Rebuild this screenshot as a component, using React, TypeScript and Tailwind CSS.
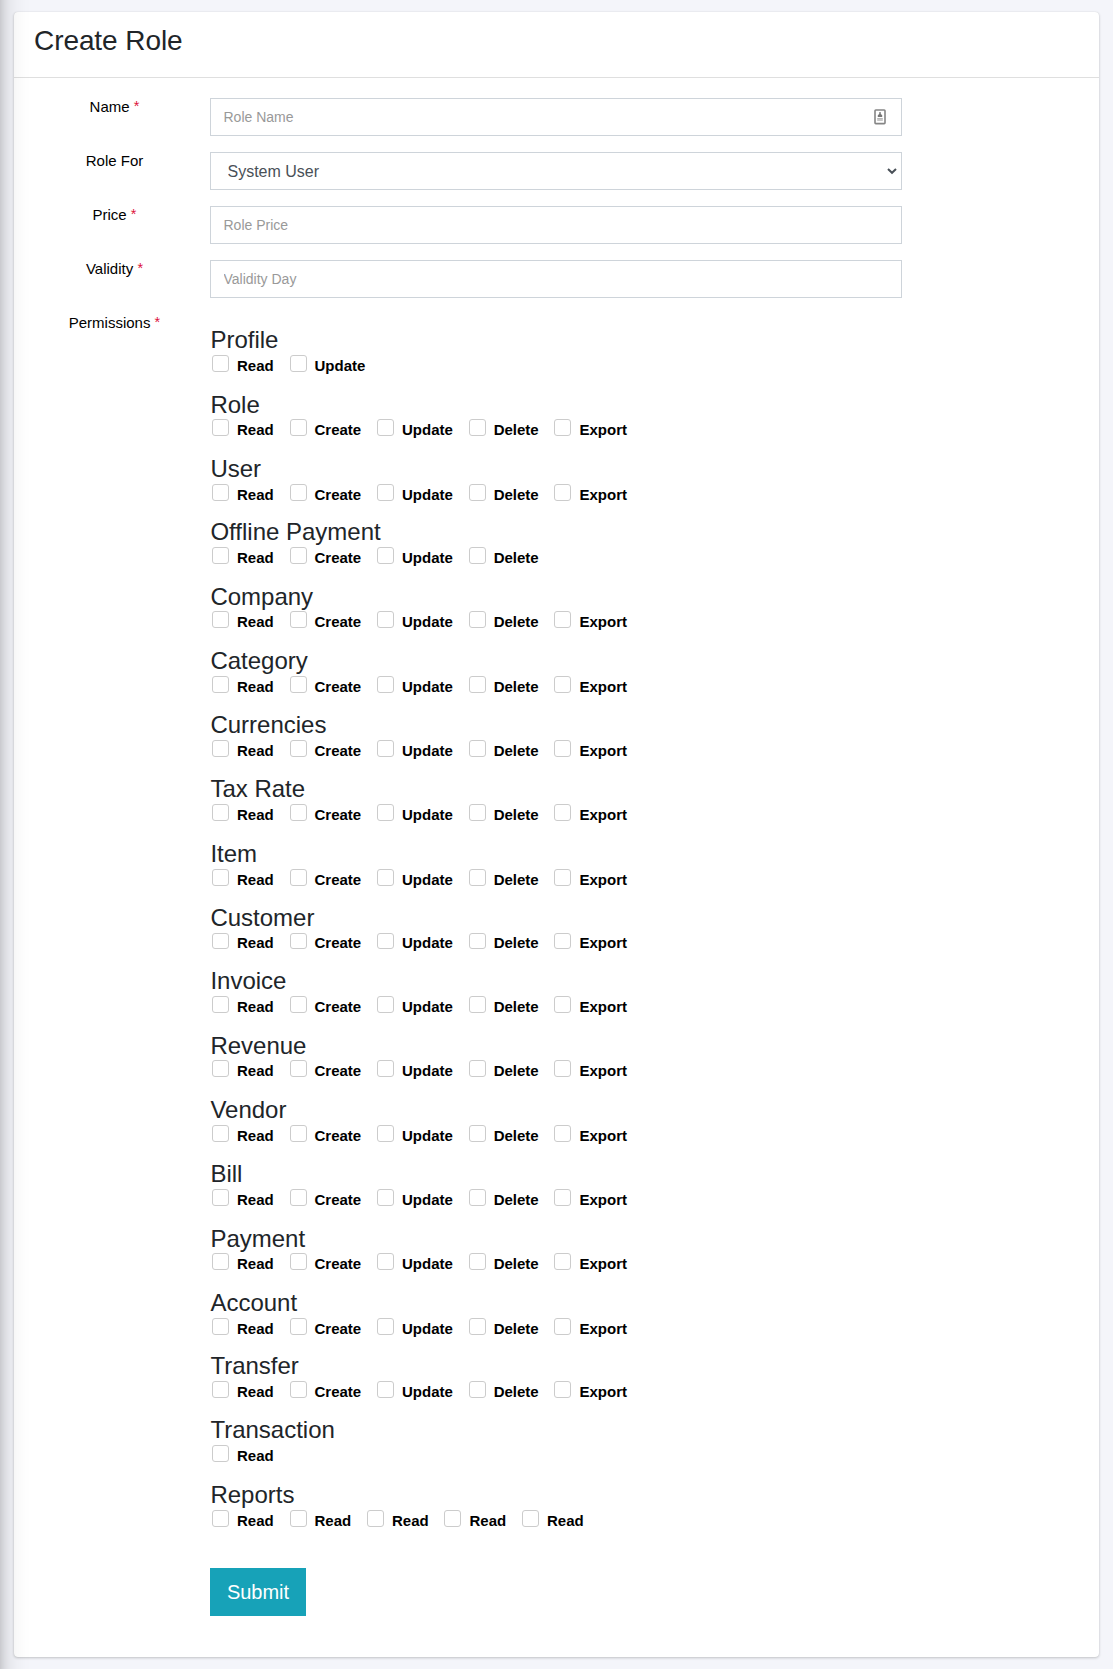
import React from "react";

type Section = { title: string; items: string[]; height: string; gap: string };

const ALL = ["Read", "Create", "Update", "Delete", "Export"];

const sections: Section[] = [
  { title: "Profile", items: ["Read", "Update"], height: "h-[65px]", gap: "mt-px" },
  { title: "Role", items: ALL, height: "h-16", gap: "mt-0" },
  { title: "User", items: ALL, height: "h-[63px]", gap: "mt-px" },
  { title: "Offline Payment", items: ALL.slice(0, 4), height: "h-[65px]", gap: "mt-px" },
  { title: "Company", items: ALL, height: "h-16", gap: "mt-0" },
  { title: "Category", items: ALL, height: "h-16", gap: "mt-px" },
  { title: "Currencies", items: ALL, height: "h-16", gap: "mt-px" },
  { title: "Tax Rate", items: ALL, height: "h-[65px]", gap: "mt-px" },
  { title: "Item", items: ALL, height: "h-16", gap: "mt-px" },
  { title: "Customer", items: ALL, height: "h-[63px]", gap: "mt-px [&_input]:h-4 [&_span]:pt-px" },
  { title: "Invoice", items: ALL, height: "h-[65px]", gap: "mt-px" },
  { title: "Revenue", items: ALL, height: "h-16", gap: "mt-0" },
  { title: "Vendor", items: ALL, height: "h-16", gap: "mt-px" },
  { title: "Bill", items: ALL, height: "h-[65px]", gap: "mt-px" },
  { title: "Payment", items: ALL, height: "h-16", gap: "mt-0" },
  { title: "Account", items: ALL, height: "h-[63px]", gap: "mt-px" },
  { title: "Transfer", items: ALL, height: "h-16", gap: "mt-px" },
  { title: "Transaction", items: ["Read"], height: "h-[65px]", gap: "mt-px" },
  { title: "Reports", items: ["Read", "Read", "Read", "Read", "Read"], height: "h-[65px]", gap: "mt-px" },
];

const inputClass =
  "block h-[38px] w-full border border-[#ced4da] bg-white px-[12.5px] text-sm text-[#495057] outline-none placeholder:text-[#999999]";

function FieldRow({
  label,
  required,
  children,
}: {
  label: string;
  required?: boolean;
  children: React.ReactNode;
}) {
  return (
    <div className="flex h-[54px]">
      <FieldLabel label={label} required={required} />
      <div className="relative h-[38px] w-[692px]">{children}</div>
    </div>
  );
}

function FieldLabel({ label, required }: { label: string; required?: boolean }) {
  return (
    <div className="mr-[13px] w-[165px] shrink-0 text-center text-[15px] leading-[18px] text-black">
      {label}
      {required && (
        <>
          {" "}
          <span className="relative -top-px text-[14.5px] leading-none text-[#dc143c]">*</span>
        </>
      )}
    </div>
  );
}

function AutofillIcon() {
  return (
    <svg
      className="absolute top-[11px] right-[16px]"
      width="12"
      height="16"
      viewBox="0 0 12 16"
      fill="none"
    >
      <rect x="1" y="1" width="10" height="13.6" rx="0.8" stroke="#858585" strokeWidth="1.6" />
      <path d="M6 3v2.5" stroke="#777777" strokeWidth="1.4" />
      <path d="M6 4.3 8.2 6.2V8H3.8V6.2z" fill="#777777" />
      <path d="M3.2 9.6h5.6M3.2 11.2h5.6" stroke="#b5b5b5" strokeWidth="1.3" />
    </svg>
  );
}

function SelectArrow() {
  return (
    <svg
      className="pointer-events-none absolute top-4 right-[5px]"
      width="10"
      height="7"
      viewBox="0 0 10 7"
      fill="none"
    >
      <path d="M1 1 5 4.8 9 1" stroke="#495057" strokeWidth="2" />
    </svg>
  );
}

function PermissionSection({ title, items, height, gap }: Section) {
  return (
    <section className={height}>
      <h4 className="h-[29px] pl-[0.4px] text-[24px] leading-[29px] text-[#212529]">{title}</h4>
      <div className={`flex pl-[2.04px] ${gap}`}>
        {items.map((item, i) => (
          <label key={i} className="mr-[15.8px] flex">
            <input
              type="checkbox"
              className="mr-[8px] h-[17px] w-[17px] appearance-none rounded-[3px] border border-[#cccccc] bg-white"
            />
            <span className="pt-[2px] text-[15px] leading-[18px] font-bold text-black">{item}</span>
          </label>
        ))}
      </div>
    </section>
  );
}

export default function App() {
  return (
    <div className="relative h-[1669px] w-[1113px] overflow-hidden bg-[#f4f5fa] pt-3 pl-[14px] font-['Liberation_Sans',Arial,sans-serif]">
      <div className="h-[1645px] w-[1085px] rounded bg-white shadow-[0_0_1px_rgba(0,0,0,0.125),0_1px_3px_rgba(0,0,0,0.2)]">
        <header className="h-[66px] border-b border-black/[0.125] pt-3 pl-5">
          <h1 className="text-[28px] leading-[33px] tracking-[-0.08px] text-[#212529]">Create Role</h1>
        </header>
        <form className="pt-5 pl-[18px]">
          <FieldRow label="Name" required>
            <input className={inputClass} placeholder="Role Name" />
            <AutofillIcon />
          </FieldRow>
          <FieldRow label="Role For">
            <select className="block h-[38px] w-full appearance-none border border-[#ced4da] bg-white px-[16.5px] pt-[2px] text-base text-[#495057]">
              <option>System User</option>
            </select>
            <SelectArrow />
          </FieldRow>
          <FieldRow label="Price" required>
            <input className={inputClass} placeholder="Role Price" />
          </FieldRow>
          <FieldRow label="Validity" required>
            <input className={inputClass} placeholder="Validity Day" />
          </FieldRow>
          <div className="flex">
            <FieldLabel label="Permissions" required />
            <div className="pt-[11px]">
              {sections.map((s) => (
                <PermissionSection key={s.title} {...s} />
              ))}
              <button
                type="button"
                className="mt-[23px] block h-12 w-24 bg-[#17a2b8] text-center text-xl text-white"
              >
                Submit
              </button>
            </div>
          </div>
        </form>
      </div>
      {/* Shadow cast by the sidebar on the left edge */}
      <div className="pointer-events-none absolute -top-24 -bottom-24 -left-[250px] w-[250px] shadow-[0_14px_28px_rgba(0,0,0,0.2),0_10px_10px_rgba(0,0,0,0.17)]" />
    </div>
  );
}
